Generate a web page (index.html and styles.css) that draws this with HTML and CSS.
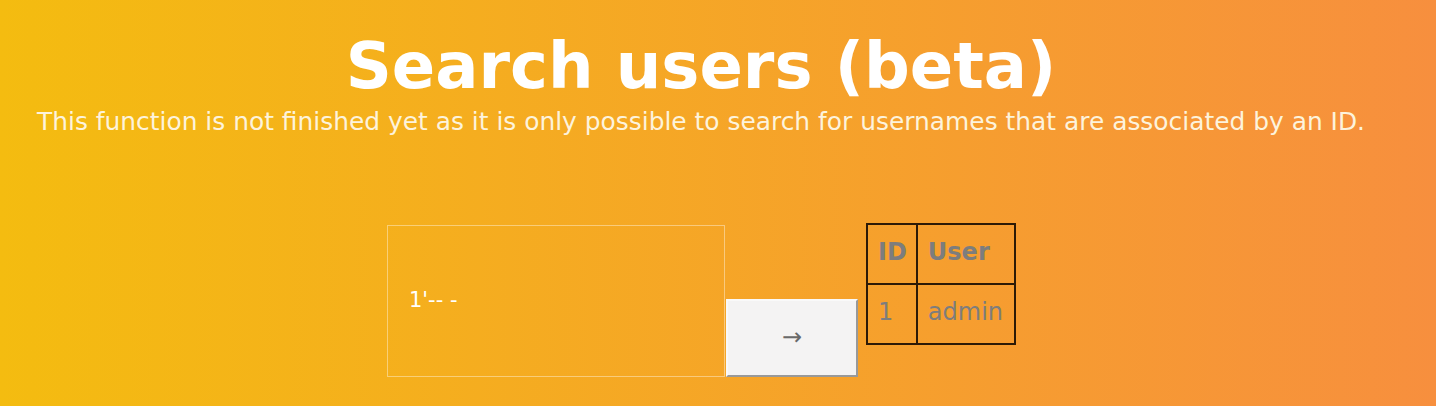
FILE: index.html
```html
<!DOCTYPE html>
<html lang="en">
<head>
<meta charset="utf-8">
<title>Search users (beta)</title>
<link rel="stylesheet" href="styles.css">
</head>
<body>
<main class="page">
  <header class="intro">
    <h1 class="title">Search users (beta)</h1>
    <p class="lead">This function is not finished yet as it is only possible to search for usernames that are associated by an ID.</p>
  </header>
  <section class="search">
    <form class="search-form">
      <input class="search-input" type="text" value="1'-- -">
      <button class="search-btn" type="button">→</button>
    </form>
    <table class="results">
      <tr><th class="col-id">ID</th><th class="col-user">User</th></tr>
      <tr><td class="col-id">1</td><td class="col-user">admin</td></tr>
    </table>
  </section>
</main>
</body>
</html>
```

FILE: styles.css
```css
html, body {
  margin: 0;
  padding: 0;
}
body {
  font-family: "DejaVu Sans", sans-serif;
  background: linear-gradient(to right, #f4bc10, #f78f3e);
  min-height: 100vh;
  color: #fff;
}
.page {
  width: 1402px;
  min-height: 406px;
  padding-top: 29px;
  box-sizing: border-box;
}
.intro {
  text-align: center;
}
.title {
  margin: 0;
  font-size: 64px;
  font-weight: bold;
  line-height: 74px;
  color: #fff;
}
.lead {
  margin: 5px 0 0;
  font-size: 24.9px;
  line-height: 28px;
  color: #fdf3dc;
}
.search {
  display: flex;
  justify-content: center;
  align-items: flex-start;
  margin-top: 88px;
}
.search-form {
  display: flex;
  align-items: flex-end;
  margin: 1px 0 0;
  padding-left: 1px;
}
.search-input {
  width: 338px;
  height: 152px;
  box-sizing: border-box;
  background: transparent;
  border: 1px solid rgba(255, 255, 255, 0.4);
  padding: 0 0 3px 21px;
  font-family: "DejaVu Sans", sans-serif;
  font-size: 21px;
  color: #fff;
  outline: none;
  margin: 0;
}
.search-btn {
  width: 132px;
  height: 78px;
  box-sizing: border-box;
  margin: 0 0 0 1px;
  background: #f4f3f3;
  border: 2px solid;
  border-color: #f9f9f9 #999999 #999999 #f9f9f9;
  font-family: "DejaVu Sans", sans-serif;
  font-size: 24px;
  line-height: 28px;
  color: #6a6a6a;
  padding: 0 0 2px;
}
.results {
  margin-left: 8px;
  margin-top: -1px;
  border-collapse: collapse;
  border: 2px solid #2d1a06;
  font-size: 24px;
  color: #7d7d7d;
}
.results th,
.results td {
  border: 2px solid #2d1a06;
  padding: 13px 10px 17px 10px;
  line-height: 28px;
  text-align: left;
}
.results .col-id {
  padding-right: 9px;
}
.results .col-user {
  padding-right: 11px;
}
.results th {
  font-weight: bold;
}
.results td {
  font-weight: normal;
}
```
